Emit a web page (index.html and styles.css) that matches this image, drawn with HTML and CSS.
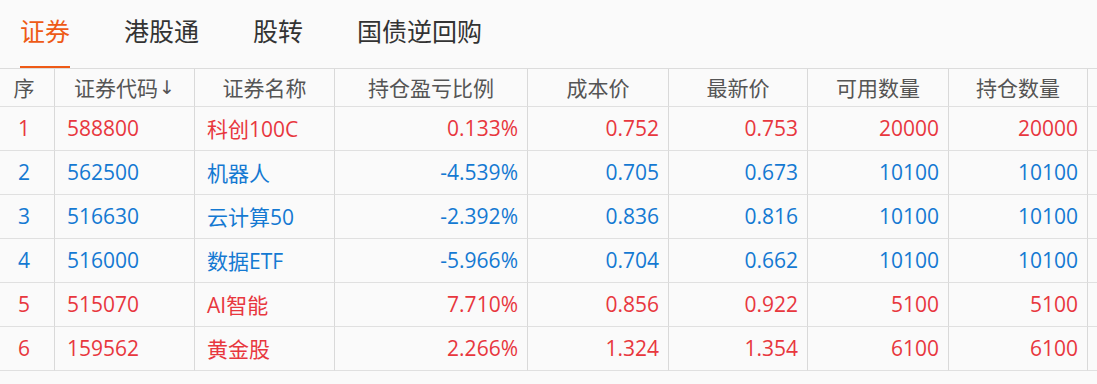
FILE: index.html
```html
<!DOCTYPE html>
<html lang="zh-CN">
<head>
<meta charset="utf-8">
<title>持仓</title>
<link rel="stylesheet" href="styles.css">
</head>
<body>
<div class="page">
  <nav class="tabs">
    <div class="tab active">证券</div>
    <div class="tab">港股通</div>
    <div class="tab">股转</div>
    <div class="tab">国债逆回购</div>
  </nav>
  <div class="grid">
    <div class="cell head first">序</div>
    <div class="cell head">证券代码<span class="arrow">↓</span></div>
    <div class="cell head">证券名称</div>
    <div class="cell head">持仓盈亏比例</div>
    <div class="cell head">成本价</div>
    <div class="cell head">最新价</div>
    <div class="cell head">可用数量</div>
    <div class="cell head">持仓数量</div>
    <div class="cell head"></div>

    <div class="cell c up">1</div><div class="cell l up">588800</div><div class="cell l up">科创100C</div><div class="cell r up">0.133%</div><div class="cell r up">0.752</div><div class="cell r up">0.753</div><div class="cell r up">20000</div><div class="cell r up">20000</div><div class="cell"></div>

    <div class="cell c down">2</div><div class="cell l down">562500</div><div class="cell l down">机器人</div><div class="cell r down">-4.539%</div><div class="cell r down">0.705</div><div class="cell r down">0.673</div><div class="cell r down">10100</div><div class="cell r down">10100</div><div class="cell"></div>

    <div class="cell c down">3</div><div class="cell l down">516630</div><div class="cell l down">云计算50</div><div class="cell r down">-2.392%</div><div class="cell r down">0.836</div><div class="cell r down">0.816</div><div class="cell r down">10100</div><div class="cell r down">10100</div><div class="cell"></div>

    <div class="cell c down">4</div><div class="cell l down">516000</div><div class="cell l down">数据ETF</div><div class="cell r down">-5.966%</div><div class="cell r down">0.704</div><div class="cell r down">0.662</div><div class="cell r down">10100</div><div class="cell r down">10100</div><div class="cell"></div>

    <div class="cell c up">5</div><div class="cell l up">515070</div><div class="cell l up">AI智能</div><div class="cell r up">7.710%</div><div class="cell r up">0.856</div><div class="cell r up">0.922</div><div class="cell r up">5100</div><div class="cell r up">5100</div><div class="cell"></div>

    <div class="cell c up">6</div><div class="cell l up">159562</div><div class="cell l up">黄金股</div><div class="cell r up">2.266%</div><div class="cell r up">1.324</div><div class="cell r up">1.354</div><div class="cell r up">6100</div><div class="cell r up">6100</div><div class="cell"></div>
  </div>
</div>
</body>
</html>
```
FILE: styles.css
```css
html, body {
  margin: 0;
  padding: 0;
  background: #fafafa;
}
body {
  font-family: "Open Sans", "Noto Sans CJK SC", sans-serif;
  color: #333;
  overflow: hidden;
}
.page {
  width: 1097px;
  height: 384px;
  overflow: hidden;
}
.tabs {
  display: flex;
  gap: 54px;
  padding-left: 20px;
  height: 68px;
  border-bottom: 1px solid #dcdcdc;
}
.tab {
  box-sizing: border-box;
  height: 68px;
  padding-top: 15px;
  font-size: 25px;
  line-height: 30px;
  color: #333;
  font-family: "Noto Sans CJK SC", sans-serif;
}
.tab.active {
  color: #ee5a16;
  border-bottom: 2px solid #ee5a16;
}
.grid {
  display: grid;
  grid-template-columns: 55px 140px 140px 193px 141px 139px 141px 139px 120px;
  grid-template-rows: 38px repeat(6, 44px);
  width: 1208px;
}
.cell {
  box-sizing: border-box;
  border-right: 1px solid #d9d9d9;
  border-bottom: 1px solid #e0e0e0;
  font-size: 21px;
  display: flex;
  align-items: center;
  white-space: nowrap;
  padding-bottom: 2px;
}
.head {
  justify-content: center;
  color: #555;
  font-family: "Noto Sans CJK SC", sans-serif;
  padding-bottom: 1px;
}
.head.first {
  padding-right: 6px;
}
.arrow {
  font-family: "DejaVu Sans", sans-serif;
  font-size: 19px;
  margin-left: 1px;
}
.c { justify-content: center; padding-right: 6px; }
.l { padding-left: 12px; }
.r { justify-content: flex-end; padding-right: 9px; }
.up { color: #e8373e; }
.down { color: #1479d2; }
```
